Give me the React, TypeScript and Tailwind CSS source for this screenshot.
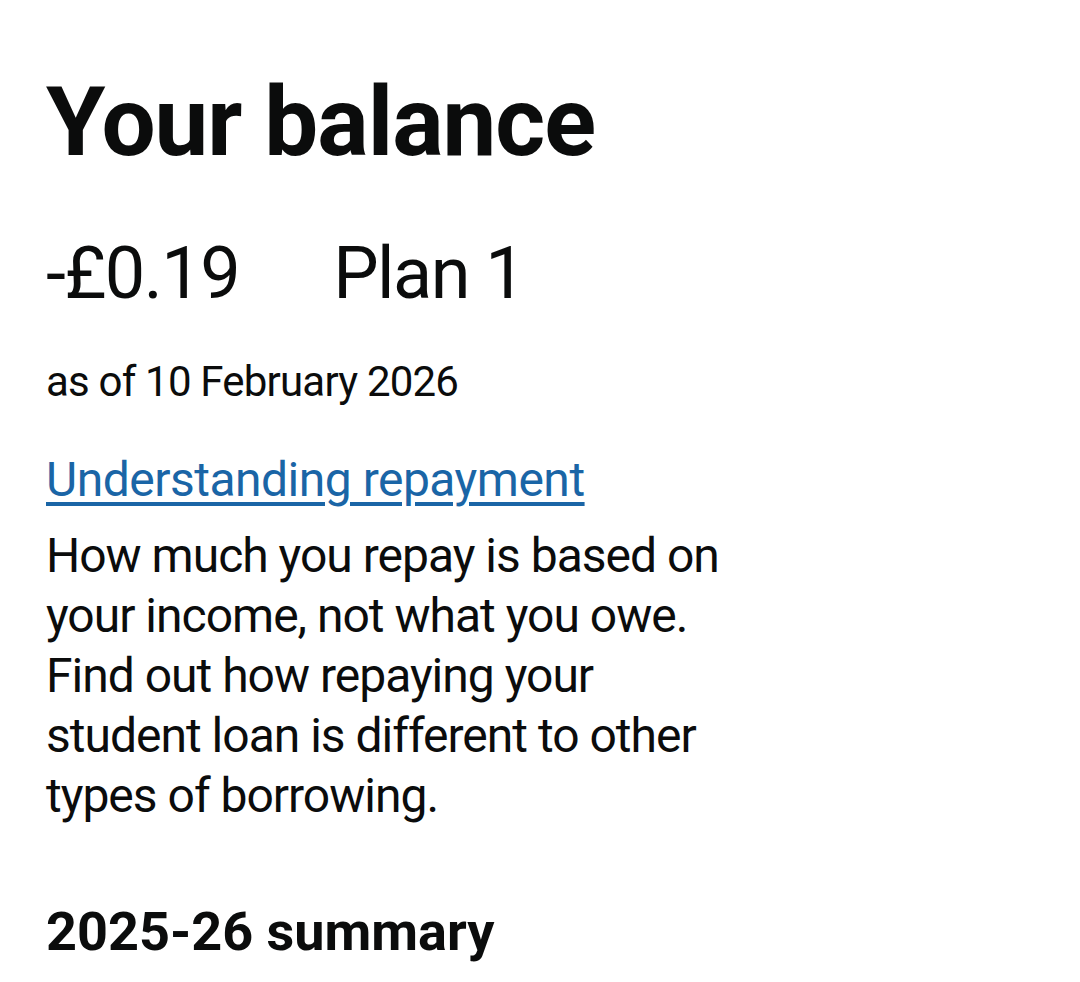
export default function App() {
  return (
    <div
      className="min-h-[982px] bg-white px-[46px] pt-[70px] text-[#0b0c0c]"
      style={{ fontFamily: 'Roboto, "Liberation Sans", sans-serif' }}
    >
      <h1 className="text-[96px] font-bold leading-[105px] tracking-[-1px]">Your balance</h1>

      <div className="mt-[59px] flex gap-[94px] text-[72px] leading-[80px] tracking-[-1.5px]">
        <span>-£0.19</span>
        <span>Plan 1</span>
      </div>

      <p className="mt-[44px] text-[42px] leading-[48px] tracking-[-0.8px]">as of 10 February 2026</p>

      <a
        href="#"
        className="mt-[44px] block text-[48px] leading-[60px] tracking-[-0.5px] text-[#1a65a6] underline decoration-[4px] underline-offset-[6px]"
      >
        Understanding repayment
      </a>

      <p className="mt-[16px] max-w-[690px] text-[48px] leading-[60px] tracking-[-1px]">
        How much you repay is based on your income, not what you owe. Find out how repaying your student loan
        is different to other types of borrowing.
      </p>

      <h2 className="mt-[76px] text-[54px] font-bold leading-[60px]">2025-26 summary</h2>
    </div>
  );
}
